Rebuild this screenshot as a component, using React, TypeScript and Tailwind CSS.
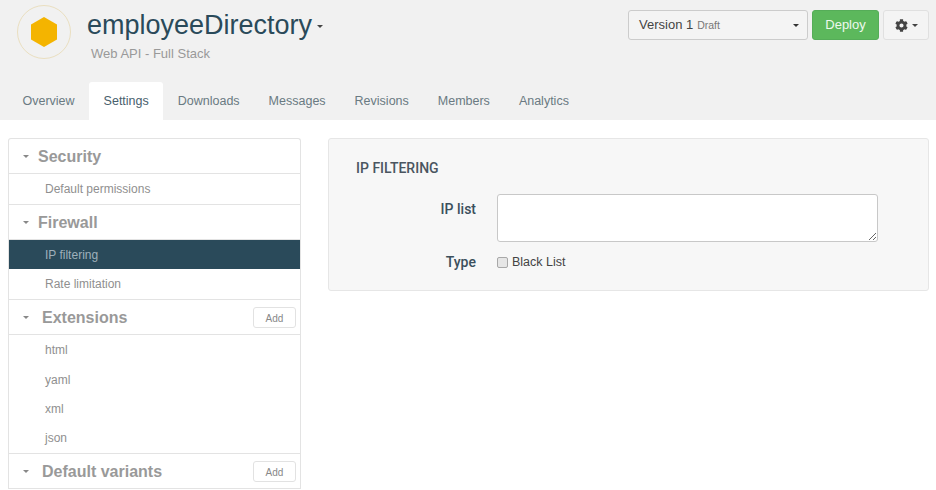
import { FaCog } from "react-icons/fa";

const TABS = ["Overview", "Settings", "Downloads", "Messages", "Revisions", "Members", "Analytics"];

function Caret({ className = "" }: { className?: string }) {
  return (
    <span
      className={`inline-block h-0 w-0 border-x-[3px] border-t-[3px] border-x-transparent ${className}`}
    />
  );
}

function SectionHead({ title, add, gap }: { title: string; add?: boolean; gap: string }) {
  return (
    <div className="flex h-[35px] items-center border-b border-[#e3e3e3] pl-[14px] pr-[4px]">
      <Caret className="border-t-[#888]" />
      <span className={`${gap} pt-[2px] text-[16px] font-bold text-[#999]`}>{title}</span>
      {add && (
        <button className="ml-auto flex h-[21px] w-[43px] items-center justify-center rounded-[3px] border border-[#e2e2e2] bg-white pt-[2px] text-[10px] text-[#888]">
          Add
        </button>
      )}
    </div>
  );
}

function Item({ label, active, height = "h-[30px]" }: { label: string; active?: boolean; height?: string }) {
  return (
    <div
      className={`flex items-center pl-[36px] text-[12px] ${height} ${
        active ? "bg-[#2a4a5a] text-[#9fb0ba]" : "text-[#8f8f8f]"
      }`}
    >
      {label}
    </div>
  );
}

export default function App() {
  return (
    <div className="h-[490px] w-[936px] overflow-hidden bg-white font-['Liberation_Sans',sans-serif]">
      <header className="h-[120px] bg-[#f1f1f1]">
        <div className="flex h-[82px] items-start">
          <div className="ml-[17px] mt-[5px] flex h-[54px] w-[54px] items-center justify-center rounded-full border border-[#eadfc0]">
            <svg width="26" height="30" viewBox="0 0 26 30">
              <path d="M13 0 L26 7.5 V22.5 L13 30 L0 22.5 V7.5 Z" fill="#f4b400" />
            </svg>
          </div>
          <div className="ml-[16px] mt-[8px]">
            <div className="flex items-center">
              <h1 className="text-[27px] leading-[34px] text-[#2a4a5a]">employeeDirectory</h1>
              <Caret className="ml-[5px] mt-[3px] border-t-[#444]" />
            </div>
            <p className="ml-[4px] mt-[4px] text-[13px] leading-[16px] text-[#999]">Web API - Full Stack</p>
          </div>
          <div className="ml-auto mr-[7px] mt-[10px] flex items-start">
            <div className="flex h-[30px] w-[180px] items-center rounded-[3px] border border-[#ccc] bg-[#f4f4f4] pl-[10px] pr-[6px]">
              <span className="text-[13px] text-[#444]">Version 1</span>
              <span className="ml-[4px] pt-[1px] text-[10.5px] text-[#777]">Draft</span>
              <Caret className="ml-auto mr-[2px] border-t-[#333]" />
            </div>
            <button className="ml-[4px] h-[30px] w-[67px] rounded-[3px] border border-[#55ad58] bg-[#5cb85c] text-[13px] text-[#eef8ee]">
              Deploy
            </button>
            <button className="ml-[4px] flex h-[30px] w-[46px] items-center justify-center rounded-[3px] border border-[#e0e0e0] bg-[#f4f4f4]">
              <FaCog size={13} className="text-[#444]" />
              <Caret className="ml-[4px] border-t-[#444]" />
            </button>
          </div>
        </div>
        <nav className="flex h-[38px] pl-[8px]">
          {TABS.map((tab) => (
            <div
              key={tab}
              className={`flex items-center rounded-t-[3px] px-[14.5px] text-[12.5px] ${
                tab === "Settings" ? "bg-white text-[#49606d]" : "text-[#6a7a82]"
              }`}
            >
              {tab}
            </div>
          ))}
        </nav>
      </header>

      <main className="flex items-start pl-[8px] pt-[18px]">
        <aside className="w-[293px] rounded-t-[3px] border-x border-t border-[#e3e3e3]">
          <SectionHead title="Security" gap="ml-[9px]" />
          <div className="border-b border-[#e3e3e3]">
            <Item label="Default permissions" />
          </div>
          <SectionHead title="Firewall" gap="ml-[9px]" />
          <div className="border-b border-[#e3e3e3]">
            <Item label="IP filtering" active height="h-[29px]" />
            <Item label="Rate limitation" />
          </div>
          <SectionHead title="Extensions" add gap="ml-[13px]" />
          <div className="border-b border-[#e3e3e3]">
            <Item label="html" />
            <Item label="yaml" />
            <Item label="xml" height="h-[28px]" />
            <Item label="json" />
          </div>
          <SectionHead title="Default variants" add gap="ml-[13px]" />
        </aside>

        <section className="ml-[27px] h-[153px] w-[601px] rounded-[3px] border border-[#e6e6e6] bg-[#f7f7f7] pl-[27px] pt-[21px]">
          <h2 className="font-['Roboto',sans-serif] text-[14px] font-medium leading-[16px] text-[#4a5560]">IP FILTERING</h2>
          <div className="mt-[18px] flex items-start">
            <label className="mt-[5px] w-[120px] text-right font-['Roboto',sans-serif] text-[14px] font-medium text-[#3b4f5c]">IP list</label>
            <textarea className="ml-[21px] h-[48px] w-[381px] rounded-[3px] border border-[#c8c8c8] bg-white" />
          </div>
          <div className="mt-[10px] flex items-center">
            <span className="w-[120px] text-right font-['Roboto',sans-serif] text-[14px] font-medium text-[#3b4f5c]">Type</span>
            <input type="checkbox" className="ml-[21px] h-[11px] w-[11px] appearance-none rounded-[2px] border border-[#a8a8a8] bg-[#e6e6e6]" />
            <span className="ml-[4px] text-[12.5px] text-[#444]">Black List</span>
          </div>
        </section>
      </main>
    </div>
  );
}
